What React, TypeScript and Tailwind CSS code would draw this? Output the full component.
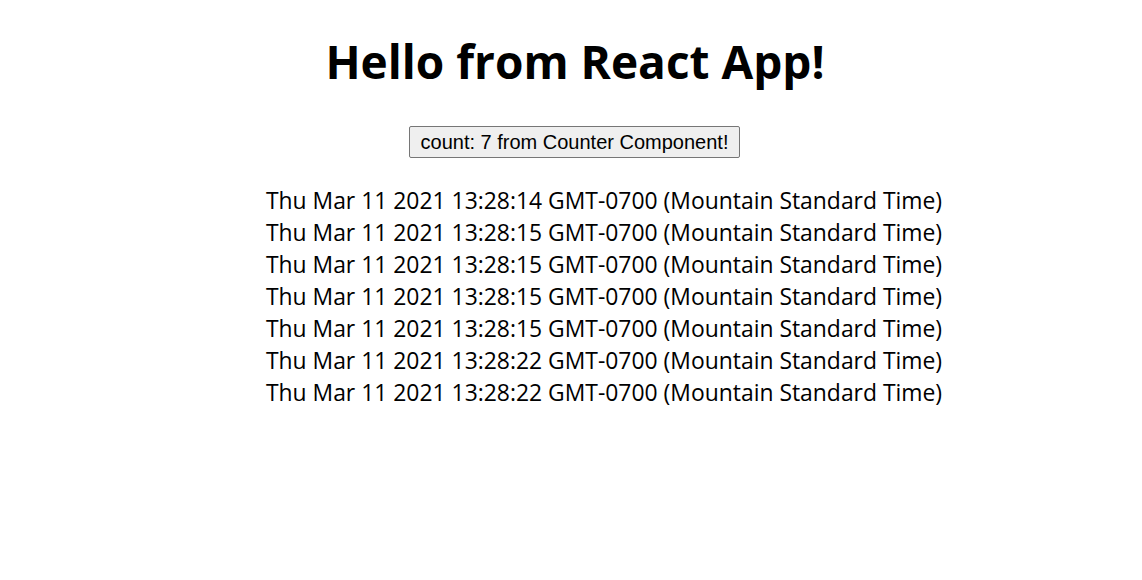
export default function App() {
  const dates = [
    "Thu Mar 11 2021 13:28:14 GMT-0700 (Mountain Standard Time)",
    "Thu Mar 11 2021 13:28:15 GMT-0700 (Mountain Standard Time)",
    "Thu Mar 11 2021 13:28:15 GMT-0700 (Mountain Standard Time)",
    "Thu Mar 11 2021 13:28:15 GMT-0700 (Mountain Standard Time)",
    "Thu Mar 11 2021 13:28:15 GMT-0700 (Mountain Standard Time)",
    "Thu Mar 11 2021 13:28:22 GMT-0700 (Mountain Standard Time)",
    "Thu Mar 11 2021 13:28:22 GMT-0700 (Mountain Standard Time)",
  ];
  return (
    <div className="min-h-[580px] bg-white text-black flex flex-col items-center">
      <h1 className="mt-[31px] text-[46px] leading-[60px] font-bold font-['Open_Sans',sans-serif] ml-[8px]">
        Hello from React App!
      </h1>
      <button className="mt-[35px] ml-[7px] h-[32px] px-[11px] border border-[#767676] rounded-[2px] bg-[#efefef] text-[20px] leading-[24px] font-['Liberation_Sans',Arial,sans-serif]">
        count: 7 from Counter Component!
      </button>
      <ul className="mt-[27px] pl-[66px] flex flex-col items-center font-['Open_Sans',sans-serif] text-[22.9px] leading-[32px]">
        {dates.map((d, i) => (
          <li key={i}>{d}</li>
        ))}
      </ul>
    </div>
  );
}
